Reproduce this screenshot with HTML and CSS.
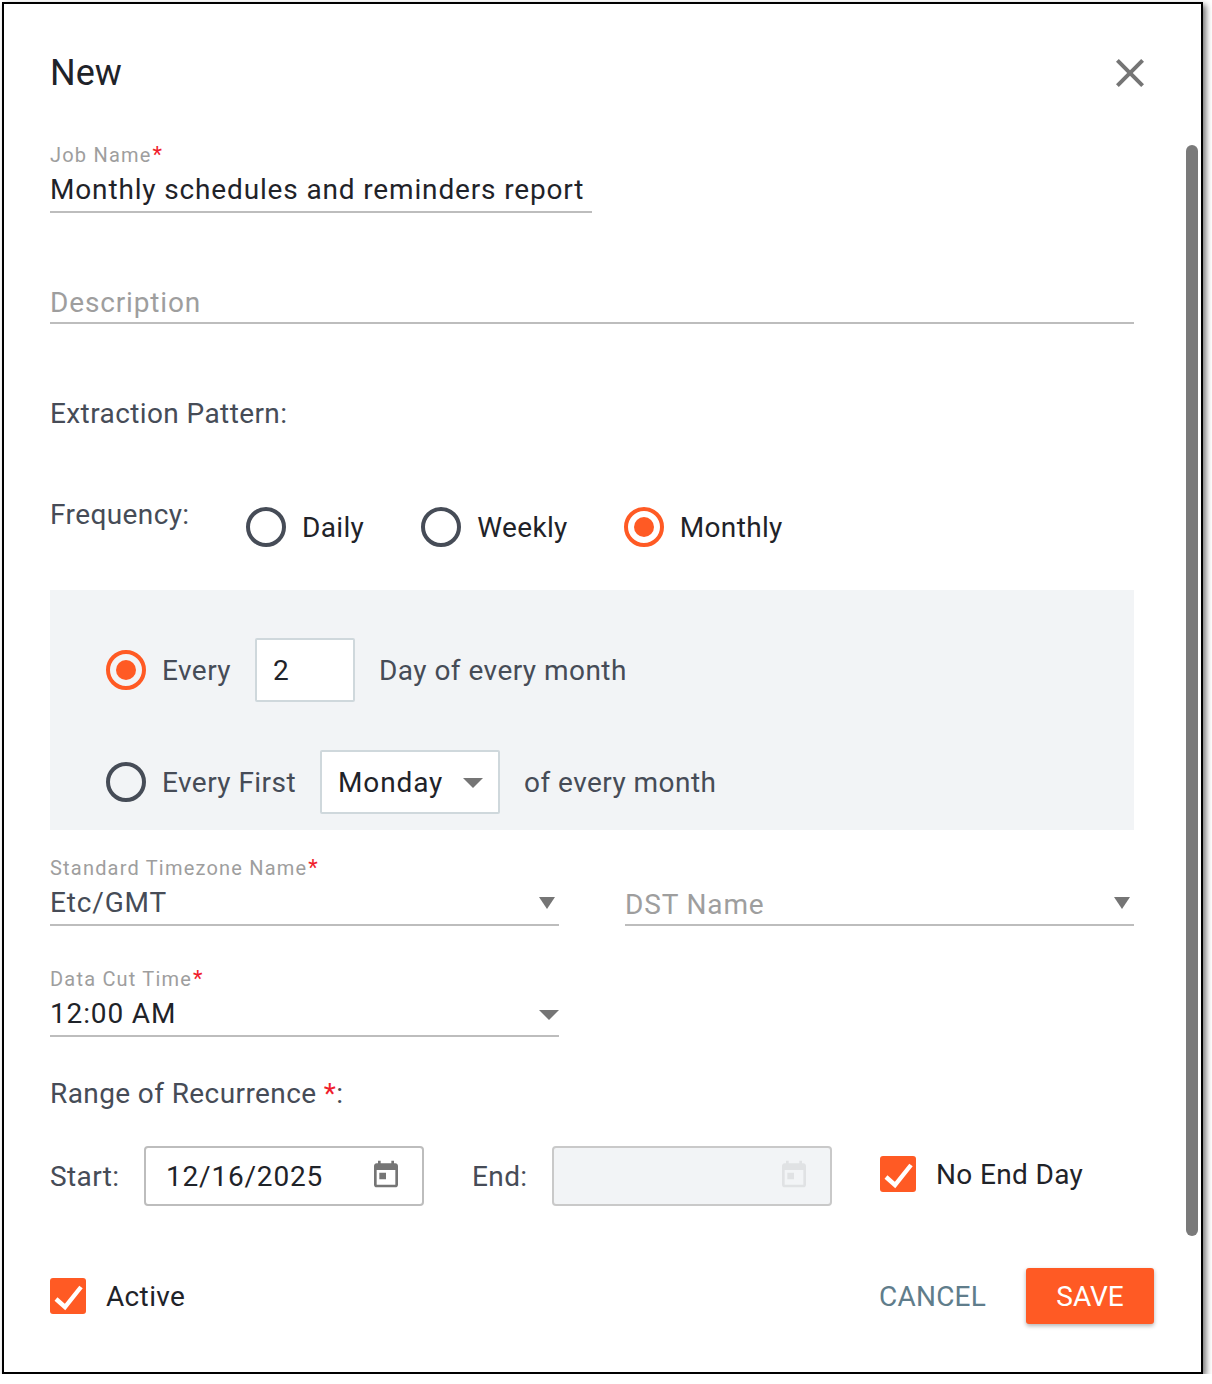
FILE: index.html
```html
<!DOCTYPE html>
<html lang="en">
<head>
  <meta charset="UTF-8">
  <title>New</title>
  <link rel="stylesheet" href="styles.css">
</head>
<body>
  <div class="dialog">
    <div class="scrollbar"></div>
    <div class="dialog-header">
      <h1>New</h1>
      <svg class="close" viewBox="0 0 24 24"><path d="M19 6.41 17.59 5 12 10.59 6.41 5 5 6.41 10.59 12 5 17.59 6.41 19 12 13.41 17.59 19 19 17.59 13.41 12z"/></svg>
    </div>

    <div class="form">
      <div class="field job-name">
        <div class="field-label">Job Name<span class="req">*</span></div>
        <div class="field-value">Monthly schedules and reminders report</div>
      </div>
      <div class="field description">
        <div class="field-value placeholder">Description</div>
      </div>

      <div class="section-title pattern-title">Extraction Pattern:</div>

      <div class="frequency">
        <div class="section-title frequency-label">Frequency:</div>
        <div class="radio-option daily"><span class="radio"></span><span class="option-text">Daily</span></div>
        <div class="radio-option weekly"><span class="radio"></span><span class="option-text">Weekly</span></div>
        <div class="radio-option"><span class="radio checked"></span><span class="option-text">Monthly</span></div>
      </div>

      <div class="panel">
        <div class="panel-row">
          <span class="radio checked"></span>
          <span class="panel-text every">Every</span>
          <div class="box day-box">2</div>
          <span class="panel-text">Day of every month</span>
        </div>
        <div class="panel-row">
          <span class="radio"></span>
          <span class="panel-text every-first">Every First</span>
          <div class="box weekday-box">Monday<span class="arrow"></span></div>
          <span class="panel-text">of every month</span>
        </div>
      </div>

      <div class="two-col">
        <div class="field select-field">
          <div class="field-label">Standard Timezone Name<span class="req">*</span></div>
          <div class="field-value dark">Etc/GMT<span class="arrow small"></span></div>
        </div>
        <div class="field select-field">
          <div class="field-label">&nbsp;</div>
          <div class="field-value placeholder dst">DST Name<span class="arrow small"></span></div>
        </div>
      </div>
      <div class="two-col cut-time">
        <div class="field select-field">
          <div class="field-label">Data Cut Time<span class="req">*</span></div>
          <div class="field-value">12:00 AM<span class="arrow"></span></div>
        </div>
      </div>

      <div class="section-title range-title">Range of Recurrence <span class="req">*</span>:</div>

      <div class="range-row">
        <span class="section-title start-label">Start:</span>
        <div class="date-box">
          12/16/2025
          <svg class="calendar" viewBox="0 0 24 24"><path d="M19 4h-1V2h-2v2H8V2H6v2H5c-1.11 0-1.99.9-1.99 2L3 20c0 1.1.89 2 2 2h14c1.1 0 2-.9 2-2V6c0-1.1-.9-2-2-2zm0 16H5V9h14v11zM7 11h5v5H7z"/></svg>
        </div>
        <span class="section-title end-label">End:</span>
        <div class="date-box disabled">
          <svg class="calendar" viewBox="0 0 24 24"><path d="M19 4h-1V2h-2v2H8V2H6v2H5c-1.11 0-1.99.9-1.99 2L3 20c0 1.1.89 2 2 2h14c1.1 0 2-.9 2-2V6c0-1.1-.9-2-2-2zm0 16H5V9h14v11zM7 11h5v5H7z"/></svg>
        </div>
        <div class="check-option no-end">
          <span class="checkbox"><svg viewBox="0 0 36 36"><path d="M6 21 15 29 31 9"/></svg></span>
          <span>No End Day</span>
        </div>
      </div>
    </div>

    <div class="dialog-footer">
      <div class="check-option">
        <span class="checkbox"><svg viewBox="0 0 36 36"><path d="M6 21 15 29 31 9"/></svg></span>
        <span>Active</span>
      </div>
      <div class="actions">
        <button class="btn-cancel">CANCEL</button>
        <button class="btn-save">SAVE</button>
      </div>
    </div>
  </div>
</body>
</html>
```

FILE: styles.css
```css
* {
  box-sizing: border-box;
}
html, body {
  margin: 0;
  padding: 0;
  background: #fff;
}
body {
  font-family: Roboto, sans-serif;
  color: #1f2329;
}
.dialog {
  position: relative;
  width: 1201px;
  height: 1372px;
  margin: 2px 0 0 2px;
  padding: 0 47px 0 46px;
  background: #fff;
  border: 2px solid #000;
  box-shadow: 3px 3px 6px rgba(0, 0, 0, 0.55);
}
.scrollbar {
  position: absolute;
  top: 141px;
  right: 3px;
  width: 12px;
  height: 1091px;
  background: #7a7a7a;
  border-radius: 6px;
}
.dialog-header {
  display: flex;
  align-items: center;
  justify-content: space-between;
  height: 96px;
  padding-top: 44px;
}
h1 {
  margin: -2px 0 0;
  font-size: 36px;
  font-weight: 400;
  line-height: 48px;
  color: #1f2329;
}
.close {
  width: 48px;
  height: 48px;
  fill: #757575;
  margin-top: -2px;
}
.form {
  width: 1084px;
}
.field {
  font-size: 28px;
}
.field-label {
  height: 24px;
  font-size: 20px;
  line-height: 24px;
  letter-spacing: 1.2px;
  color: #9e9e9e;
}
.req {
  color: #f01e2c;
}
.field-label .req {
  margin-left: 1px;
  font-size: 22px;
}
.field-value {
  position: relative;
  height: 46px;
  line-height: 46px;
  font-size: 28px;
  letter-spacing: 0.85px;
  border-bottom: 2px solid #bdbdbd;
}
.job-name {
  width: 542px;
  margin-top: 43px;
}
.description {
  margin-top: 65px;
}
.description .field-value {
  line-height: 50px;
}
.placeholder {
  color: #9e9e9e;
}
.dst {
  line-height: 50px;
}
.dark {
  color: #464c57;
}
.section-title {
  font-size: 28px;
  line-height: 32px;
  letter-spacing: 0.4px;
  color: #464c57;
}
.pattern-title {
  margin-top: 74px;
}
.frequency {
  display: flex;
  align-items: center;
  height: 40px;
  margin-top: 77px;
}
.frequency-label {
  width: 196px;
  margin-top: -25px;
}
.radio-option {
  display: flex;
  align-items: center;
}
.radio-option.daily {
  margin-right: 57px;
}
.radio-option.weekly {
  margin-right: 56px;
}
.option-text {
  margin-left: 16px;
  font-size: 28px;
  letter-spacing: 0.35px;
}
.radio {
  position: relative;
  flex: none;
  display: inline-block;
  width: 40px;
  height: 40px;
  border: 4px solid #464c57;
  border-radius: 50%;
}
.radio.checked {
  border-color: #ff5a24;
}
.radio.checked::after {
  content: "";
  position: absolute;
  top: 6px;
  left: 6px;
  width: 20px;
  height: 20px;
  background: #ff5a24;
  border-radius: 50%;
}
.panel {
  height: 240px;
  margin-top: 43px;
  padding: 48px 56px 0;
  background: #f2f4f6;
}
.panel-row {
  display: flex;
  align-items: center;
  height: 64px;
  margin-bottom: 48px;
}
.panel-text {
  font-size: 28px;
  letter-spacing: 0.45px;
  color: #464c57;
  margin-left: 16px;
}
.every {
  margin-right: 24px;
}
.every-first {
  margin-right: 24px;
}
.box {
  display: flex;
  align-items: center;
  height: 64px;
  margin-right: 24px;
  font-size: 28px;
  color: #1f2329;
  background: #fff;
  border: 2px solid #cfd8dc;
  border-radius: 2px;
}
.box + .panel-text {
  margin-left: 0;
}
.day-box {
  width: 100px;
  padding-left: 16px;
}
.weekday-box {
  position: relative;
  width: 180px;
  padding-left: 16px;
  letter-spacing: 0.85px;
}
.arrow {
  position: absolute;
  right: 0;
  top: 50%;
  margin-top: -3px;
  border-style: solid;
  border-width: 10px 10px 0;
  border-color: #757575 transparent transparent;
}
.arrow.small {
  right: 4px;
  margin-top: -5px;
  border-width: 12px 8px 0;
}
.weekday-box .arrow {
  right: 15px;
  margin-top: -4px;
  border-width: 10px 10.5px 0;
}
.two-col {
  display: flex;
  justify-content: space-between;
  margin-top: 26px;
}
.select-field {
  width: 509px;
}
.cut-time {
  margin-top: 41px;
}
.range-title {
  margin-top: 41px;
}
.range-row {
  display: flex;
  align-items: center;
  height: 60px;
  margin-top: 36px;
}
.start-label {
  width: 94px;
  margin-top: 2px;
}
.end-label {
  width: 80px;
  margin: 2px 0 0 48px;
}
.date-box {
  position: relative;
  display: flex;
  align-items: center;
  width: 280px;
  height: 60px;
  padding-left: 20px;
  font-size: 28px;
  letter-spacing: 0.8px;
  border: 2px solid #bdbdbd;
  border-radius: 4px;
}
.date-box.disabled {
  background: #f2f4f6;
  border-color: #c9c9c9;
}
.calendar {
  position: absolute;
  top: 10px;
  right: 20px;
  width: 32px;
  height: 32px;
  fill: #757575;
}
.disabled .calendar {
  fill: #e0e2e4;
}
.check-option {
  display: flex;
  align-items: center;
  gap: 20px;
  font-size: 28px;
  letter-spacing: 0.35px;
}
.no-end {
  margin-left: 48px;
  margin-top: -4px;
}
.checkbox {
  display: block;
  flex: none;
  width: 36px;
  height: 36px;
  background: #ff5a24;
  border-radius: 3px;
}
.checkbox svg {
  display: block;
  width: 36px;
  height: 36px;
  fill: none;
  stroke: #fff;
  stroke-width: 4.4;
}
.dialog-footer {
  display: flex;
  align-items: center;
  justify-content: space-between;
  height: 56px;
  margin-top: 62px;
}
.actions {
  display: flex;
  align-items: center;
  gap: 40px;
}
button {
  font-family: Roboto, sans-serif;
  font-size: 28px;
  border: none;
  padding: 0;
  background: none;
}
.btn-cancel {
  color: #607d8b;
  letter-spacing: 0.2px;
}
.btn-save {
  width: 128px;
  height: 56px;
  color: #fff;
  background: #ff5a24;
  border-radius: 3px;
  box-shadow: 0 2px 4px rgba(0, 0, 0, 0.3);
}
```
